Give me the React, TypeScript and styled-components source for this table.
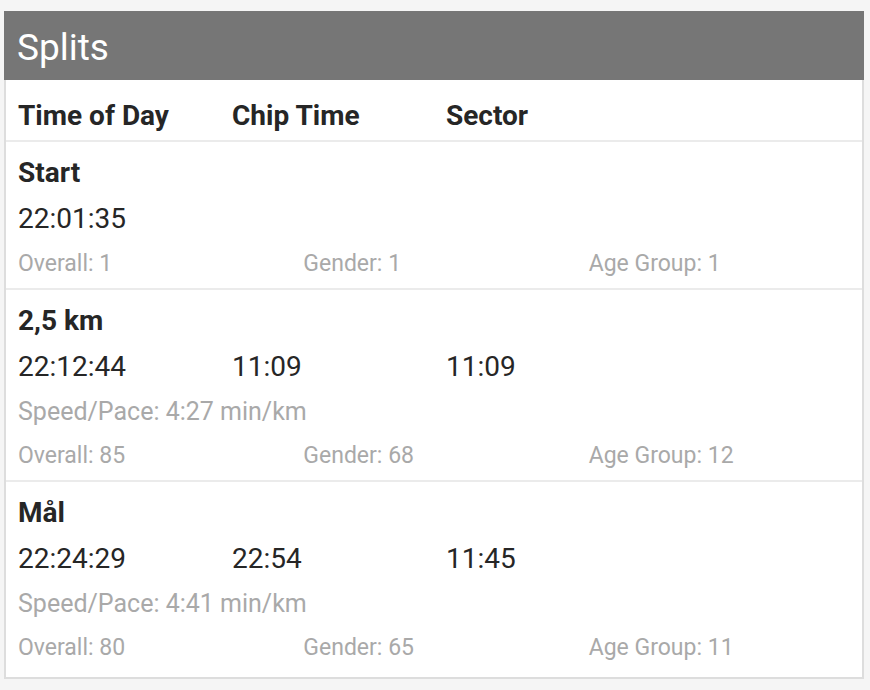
import React from 'react';
import styled, { createGlobalStyle } from 'styled-components';

const GlobalStyle = createGlobalStyle`
  body {
    margin: 0;
    background: #f5f5f5;
    font-family: Roboto, "Liberation Sans", sans-serif;
    color: #262626;
  }
`;

const Page = styled.div`
  padding: 11px 6px 12px 4px;
`;

const Card = styled.div`
  width: 860px;
  background: #fff;
`;

const Header = styled.div`
  height: 64px;
  padding: 5px 0 0 13px;
  line-height: 64px;
  background: #767676;
  color: #fff;
  font-size: 37px;
`;

const Body = styled.div`
  border: 2px solid #dddddd;
  border-top: none;
`;

const Columns = styled.div<{ $cols: number }>`
  display: grid;
  grid-template-columns: repeat(${p => p.$cols}, 1fr);
`;

const HeadRow = styled(Columns)`
  padding: 21px 0 9px;
  border-bottom: 2px solid #ebebeb;
`;

const HeadCell = styled.div`
  padding-left: 12px;
  font-size: 28px;
  font-weight: 700;
  line-height: 30px;
`;

const Section = styled.div`
  padding: 8px 0 2px;
  border-bottom: 2px solid #ebebeb;
  &:last-child {
    border-bottom: none;
    padding-bottom: 7px;
  }
`;

const Title = styled.div`
  padding-left: 12px;
  font-size: 28px;
  font-weight: 700;
  line-height: 46px;
`;

const TimeCell = styled.div`
  padding-left: 12px;
  font-size: 28px;
  line-height: 46px;
`;

const Pace = styled.div`
  padding-left: 12px;
  font-size: 25px;
  line-height: 44px;
  color: #a9a9a9;
`;

const StatCell = styled.div`
  padding-left: 12px;
  font-size: 23px;
  line-height: 44px;
  color: #a9a9a9;
`;

interface Split {
  name: string;
  times: string[];
  pace?: string;
  overall: number;
  gender: number;
  age: number;
}

const splits: Split[] = [
  { name: 'Start', times: ['22:01:35'], overall: 1, gender: 1, age: 1 },
  { name: '2,5 km', times: ['22:12:44', '11:09', '11:09'], pace: '4:27 min/km', overall: 85, gender: 68, age: 12 },
  { name: 'Mål', times: ['22:24:29', '22:54', '11:45'], pace: '4:41 min/km', overall: 80, gender: 65, age: 11 },
];

export default function App() {
  return (
    <Page>
      <GlobalStyle />
      <Card>
        <Header>Splits</Header>
        <Body>
          <HeadRow $cols={4}>
            <HeadCell>Time of Day</HeadCell>
            <HeadCell>Chip Time</HeadCell>
            <HeadCell>Sector</HeadCell>
          </HeadRow>
          {splits.map(s => (
            <Section key={s.name}>
              <Title>{s.name}</Title>
              <Columns $cols={4}>
                {s.times.map((t, i) => <TimeCell key={i}>{t}</TimeCell>)}
              </Columns>
              {s.pace && <Pace>Speed/Pace: {s.pace}</Pace>}
              <Columns $cols={3}>
                <StatCell>Overall: {s.overall}</StatCell>
                <StatCell>Gender: {s.gender}</StatCell>
                <StatCell>Age Group: {s.age}</StatCell>
              </Columns>
            </Section>
          ))}
        </Body>
      </Card>
    </Page>
  );
}
